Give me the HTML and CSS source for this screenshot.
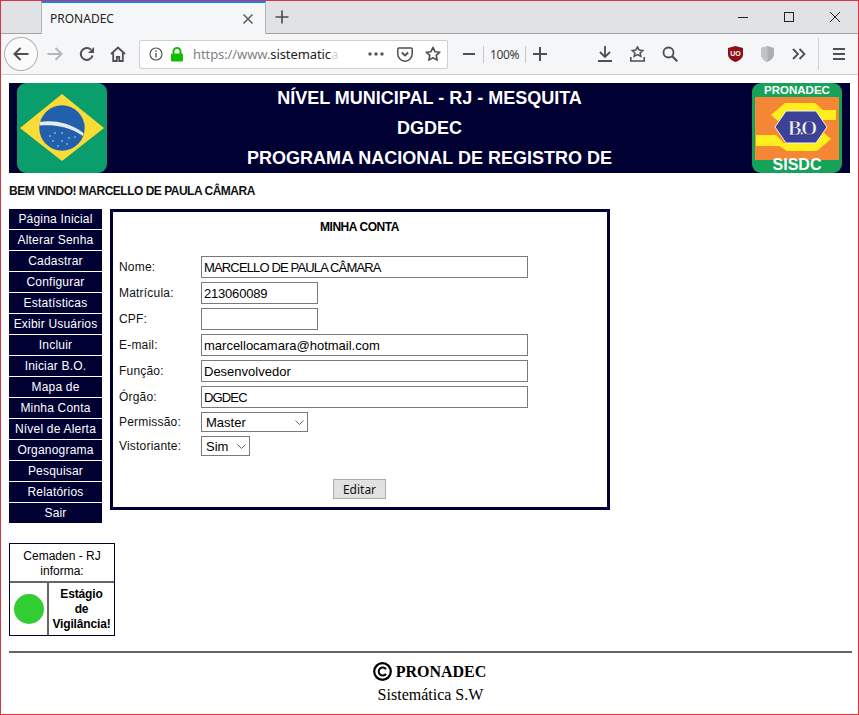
FILE: index.html
```html
<!DOCTYPE html>
<html>
<head>
  <title>PRONADEC</title>
  <link rel="stylesheet" href="styles.css">
</head>
<body>
  <div class="window">
    <div class="tabbar">
      <div class="tab">
        <span class="tab-title">PRONADEC</span>
        <svg class="tab-close" width="12" height="12" viewBox="0 0 12 12"><path d="M1.5 1.5l9 9M10.5 1.5l-9 9" stroke="#5a5a5e" stroke-width="1.5" fill="none"/></svg>
      </div>
      <svg class="tab-new" width="16" height="16" viewBox="0 0 16 16"><path d="M8 1.5v13M1.5 8h13" stroke="#4a4a4f" stroke-width="1.6" fill="none"/></svg>
      <div class="winctl">
        <svg width="46" height="12" viewBox="0 0 46 12"><path d="M18 6.5h10" stroke="#222" fill="none"/></svg>
        <svg width="46" height="12" viewBox="0 0 46 12"><rect x="18.5" y="1.5" width="9" height="9" stroke="#222" fill="none"/></svg>
        <svg width="46" height="12" viewBox="0 0 46 12"><path d="M18 1l10 10M28 1L18 11" stroke="#222" fill="none"/></svg>
      </div>
    </div>

    <div class="toolbar">
      <div class="back">
        <svg width="18" height="16" viewBox="0 0 18 16"><path d="M16.5 8H2.5M8.5 2L2.5 8l6 6" stroke="#4f4f52" stroke-width="2" fill="none"/></svg>
      </div>
      <div class="tool w34">
        <svg width="18" height="16" viewBox="0 0 18 16"><path d="M1.5 8h14M9.5 2l6 6-6 6" stroke="#b6b6b8" stroke-width="2" fill="none"/></svg>
      </div>
      <div class="tool w31">
        <svg width="16" height="16" viewBox="0 0 16 16"><path d="M13.6 9.5A6 6 0 1 1 12 3.6" stroke="#4f4f52" stroke-width="2" fill="none"/><path d="M15 1v6H9z" fill="#4f4f52"/></svg>
      </div>
      <div class="tool w32">
        <svg width="16" height="16" viewBox="0 0 16 16"><path d="M1 8l7-6.5L15 8M3.2 7v8h3.6v-4h2.4v4h3.6V7" stroke="#4f4f52" stroke-width="1.8" fill="none"/></svg>
      </div>

      <div class="urlbar">
        <svg class="url-info" width="14" height="14" viewBox="0 0 14 14"><circle cx="7" cy="7" r="6" stroke="#55555a" stroke-width="1.2" fill="none"/><path d="M7 6v4.5M7 3.2v1.6" stroke="#55555a" stroke-width="1.4"/></svg>
        <svg class="url-lock" width="14" height="15" viewBox="0 0 14 15"><path d="M3.5 7V4.5a3.5 3.5 0 0 1 7 0V7" stroke="#12bc00" stroke-width="2" fill="none"/><rect x="1" y="6.5" width="12" height="8" rx="1" fill="#12bc00"/></svg>
        <span class="url-text"><span class="url-dim">https://www.</span>sistematic<span class="url-fade">a</span></span>
        <svg class="url-dots" width="16" height="4" viewBox="0 0 16 4"><circle cx="2" cy="2" r="1.7" fill="#55555a"/><circle cx="8" cy="2" r="1.7" fill="#55555a"/><circle cx="14" cy="2" r="1.7" fill="#55555a"/></svg>
        <svg class="url-pocket" width="16" height="15" viewBox="0 0 16 15"><path d="M1.8 1h12.4a1 1 0 0 1 1 1v5a7.2 7.2 0 0 1-14.400 0V2a1 1 0 0 1 1-1z" stroke="#4f4f52" stroke-width="1.5" fill="none"/><path d="M4.800 5.500L8 8.500l3.200-3" stroke="#4f4f52" stroke-width="1.8" fill="none"/></svg>
        <svg class="url-star" width="16" height="16" viewBox="0 0 16 16"><path d="M8 1.300l2 4.400 4.800.5-3.600 3.200 1 4.700L8 11.700l-4.200 2.400 1-4.700-3.600-3.200 4.800-.5z" stroke="#4f4f52" stroke-width="1.6" fill="none" stroke-linejoin="round"/></svg>
      </div>

      <div class="zoombox">
        <svg width="14" height="14" viewBox="0 0 14 14"><path d="M1 7h12" stroke="#4f4f52" stroke-width="2"/></svg>
        <span class="zoom-val">100%</span>
        <svg width="14" height="14" viewBox="0 0 14 14"><path d="M0 7h14M7 0v14" stroke="#4f4f52" stroke-width="2"/></svg>
      </div>

      <div class="tools-right">
        <div class="tool w32">
          <svg width="14" height="16" viewBox="0 0 14 16"><path d="M7 0v10M2 6l5 5 5-5M0 15h14" stroke="#4f4f52" stroke-width="1.8" fill="none"/></svg>
        </div>
        <div class="tool w32">
          <svg width="15" height="16" viewBox="0 0 15 16"><path d="M7.500 .8l1.700 3.300 3.500.4-2.600 2.400.7 3.400-3.300-1.700-3.300 1.700.7-3.400L2.300 4.500l3.500-.4z" stroke="#4f4f52" stroke-width="1.500" fill="none"/><path d="M.8 11v4h13.400v-4" stroke="#4f4f52" stroke-width="1.600" fill="none"/></svg>
        </div>
        <div class="tool w33">
          <svg width="16" height="16" viewBox="0 0 16 16"><circle cx="6.500" cy="6.500" r="5" stroke="#4f4f52" stroke-width="1.800" fill="none"/><path d="M10 10l5.300 5.300" stroke="#4f4f52" stroke-width="2.200"/></svg>
        </div>
        <div class="tool-gap"></div>
        <div class="tool w32">
          <svg width="15" height="16" viewBox="0 0 15 16"><path d="M7.500 0L15 2v6.500c0 3.500-3.500 6-7.500 7.500C3.500 14.500 0 12 0 8.500V2z" fill="#8f0f14"/><text class="ublock" x="7.500" y="9.500" text-anchor="middle">UO</text></svg>
        </div>
        <div class="tool w32">
          <svg width="13" height="16" viewBox="0 0 13 16"><path d="M6.500 0L13 2v6c0 3.500-3 6.500-6.500 8C3 14.500 0 11.500 0 8V2z" fill="#adaeb0"/><path d="M6.500 0L0 2v6c0 3.500 3 6.500 6.500 8z" fill="#c2c3c5"/></svg>
        </div>
        <div class="tool w32">
          <svg width="14" height="12" viewBox="0 0 14 12"><path d="M1 1l5 5-5 5M7.500 1l5 5-5 5" stroke="#4f4f52" stroke-width="1.800" fill="none"/></svg>
        </div>
        <div class="tool-sep"></div>
        <div class="tool w39">
          <svg width="14" height="12" viewBox="0 0 14 12"><path d="M1 1h12M1 6h12M1 11h12" stroke="#4f4f52" stroke-width="2"/></svg>
        </div>
      </div>
    </div>

    <div class="page">
      <div class="banner">
        <svg class="flag" width="90" height="90" viewBox="0 0 90 90">
          <rect width="90" height="90" rx="9" fill="#0a9e6d"/>
          <path d="M45 11L87 45 45 78 3 45z" fill="#fbdc36"/>
          <circle cx="45" cy="45" r="22.700" fill="#2260ac"/>
          <path d="M22.500 39C35 37 52 39 66.500 50L66 53C52 43 36 41.500 22.600 42.500z" fill="#e8ebea"/>
          <g fill="#cfdcec">
            <circle cx="33" cy="53" r=".8"/><circle cx="38" cy="50" r=".8"/><circle cx="45" cy="50" r=".8"/>
            <circle cx="52" cy="55" r=".8"/><circle cx="58" cy="54" r=".8"/><circle cx="45" cy="58" r=".8"/>
            <circle cx="36" cy="58" r=".8"/><circle cx="50" cy="61" r=".8"/><circle cx="41" cy="63" r=".8"/>
          </g>
        </svg>
        <div class="banner-title">
          <div>NÍVEL MUNICIPAL - RJ - MESQUITA</div>
          <div>DGDEC</div>
          <div>PROGRAMA NACIONAL DE REGISTRO DE</div>
        </div>
        <svg class="logo" width="90" height="90" viewBox="0 0 90 90">
          <rect width="90" height="90" rx="9" fill="#17a25a"/>
          <rect x="3" y="14" width="84" height="63" fill="#f58636"/>
          <path d="M19 32L33 20H63L71 27H84V37H68L61 28H36L26 38z" fill="#fdee1c"/>
          <path d="M4 52H24L32 60H62L72 50 79 56 65 68H35L27 63H4z" fill="#fdee1c"/>
          <path d="M23 44L34 28H64L75 44 64 60H34z" fill="#3d4198" stroke="#f4f4f4" stroke-width="1"/>
          <text class="logo-bo" x="49" y="52" text-anchor="middle">B.O</text>
          <text class="logo-top" x="45" y="11" text-anchor="middle">PRONADEC</text>
          <text class="logo-bottom" x="45" y="87" text-anchor="middle">SISDC</text>
        </svg>
      </div>

      <p class="welcome">BEM VINDO! MARCELLO DE PAULA CÂMARA</p>

      <div class="content">
        <div class="menu">
          <a>Página Inicial</a>
          <a>Alterar Senha</a>
          <a>Cadastrar</a>
          <a>Configurar</a>
          <a>Estatísticas</a>
          <a>Exibir Usuários</a>
          <a>Incluir</a>
          <a>Iniciar B.O.</a>
          <a>Mapa de</a>
          <a>Minha Conta</a>
          <a>Nível de Alerta</a>
          <a>Organograma</a>
          <a>Pesquisar</a>
          <a>Relatórios</a>
          <a>Sair</a>
        </div>

        <form class="account">
          <h2>MINHA CONTA</h2>
          <div class="row"><label>Nome:</label><input class="long caps" type="text" value="MARCELLO DE PAULA CÂMARA"></div>
          <div class="row"><label>Matrícula:</label><input class="short digits" type="text" value="213060089"></div>
          <div class="row"><label>CPF:</label><input class="short" type="text"></div>
          <div class="row"><label>E-mail:</label><input class="long" type="text" value="marcellocamara@hotmail.com"></div>
          <div class="row"><label>Função:</label><input class="long" type="text" value="Desenvolvedor"></div>
          <div class="row"><label>Órgão:</label><input class="long caps" type="text" value="DGDEC"></div>
          <div class="row row-select"><label>Permissão:</label><select class="perm"><option>Master</option></select></div>
          <div class="row row-select"><label>Vistoriante:</label><select class="vist"><option>Sim</option></select></div>
          <div class="actions"><button type="button">Editar</button></div>
        </form>
      </div>

      <div class="cemaden">
        <div class="cem-head">Cemaden - RJ informa:</div>
        <div class="cem-light"><span class="dot"></span></div>
        <div class="cem-status">Estágio<br>de<br>Vigilância!</div>
      </div>

      <div class="footer">
        <div class="foot-brand">
          <svg class="copy" width="19" height="19" viewBox="0 0 19 19"><circle cx="9.500" cy="9.500" r="8.300" stroke="#000" stroke-width="2.200" fill="none"/><path d="M13 7.200A4 4 0 1 0 13 11.800" stroke="#000" stroke-width="2" fill="none"/></svg>
          PRONADEC
        </div>
        <div class="foot-sub">Sistemática S.W</div>
      </div>
    </div>
  </div>
</body>
</html>
```

FILE: styles.css
```css
html, body {
  margin: 0;
  padding: 0;
  background-color: #ffffff;
}

.window {
  box-sizing: border-box;
  width: 859px;
  height: 715px;
  border: 1px solid #d9343f;
  overflow: hidden;
  font-family: 'Liberation Sans', Arial, sans-serif;
  color: #000000;
}

/* browser chrome */
.tabbar {
  display: flex;
  align-items: stretch;
  height: 32px;
  background-color: #e1e2e5;
  border-bottom: 1px solid #a3a3a6;
}

.tab {
  display: flex;
  align-items: center;
  justify-content: space-between;
  box-sizing: border-box;
  width: 225px;
  height: 33px;
  margin-left: 40px;
  padding: 0 11px 0 8px;
  background-color: #f5f6f7;
  border-top: 2px solid #0a84ff;
  border-left: 1px solid #b5b5b7;
  border-right: 1px solid #b5b5b7;
}

.tab-title {
  font-family: 'Noto Sans', sans-serif;
  font-size: 12px;
  color: #222222;
}

.tab-new {
  align-self: center;
  margin-left: 8px;
}

.winctl {
  display: flex;
  align-items: center;
  margin-left: auto;
}

.toolbar {
  display: flex;
  align-items: center;
  height: 40px;
  padding-left: 3px;
  background-color: #f5f6f7;
  border-bottom: 1px solid #cfcfd1;
}

.back {
  display: flex;
  align-items: center;
  justify-content: center;
  box-sizing: border-box;
  width: 34px;
  height: 34px;
  border: 1px solid #b1b1b3;
  border-radius: 50%;
  background-color: #fbfbfb;
}

.tool {
  display: flex;
  align-items: center;
  justify-content: center;
  height: 32px;
}

.w31 { width: 31px; }
.w32 { width: 32px; }
.w33 { width: 33px; }
.w34 { width: 34px; }
.w39 { width: 39px; }

.tool-gap { width: 33px; }

.tool-sep {
  width: 1px;
  height: 32px;
  margin-left: 3px;
  background-color: #d4d4d6;
}

.urlbar {
  display: flex;
  align-items: center;
  box-sizing: border-box;
  width: 311px;
  height: 29px;
  margin-left: 5px;
  padding: 0 6px 0 9px;
  background-color: #ffffff;
  border: 1px solid #cfcfd1;
  border-radius: 2px;
}

.url-lock { margin-left: 7px; }

.url-text {
  flex: 1;
  margin-left: 9px;
  font-family: 'Noto Sans', sans-serif;
  font-size: 13px;
  letter-spacing: -0.1px;
  white-space: nowrap;
  color: #222222;
}

.url-dim { color: #808084; }
.url-fade { color: #d4d4d6; }

.url-pocket { margin-left: 13px; }
.url-star { margin-left: 12px; }

.zoombox {
  display: flex;
  align-items: center;
  margin-left: 14px;
}

.zoom-val {
  box-sizing: border-box;
  width: 43px;
  margin: 0 7px;
  font-family: 'Noto Sans', sans-serif;
  font-size: 12px;
  letter-spacing: -0.4px;
  text-align: center;
  color: #3c3c40;
  border-left: 1px solid #c8c8ca;
  border-right: 1px solid #c8c8ca;
}

.tools-right {
  display: flex;
  align-items: center;
  margin-left: 42px;
}

.ublock {
  font-family: 'Liberation Sans', sans-serif;
  font-size: 7px;
  font-weight: bold;
  fill: #ffffff;
}

/* page */
.page {
  padding: 8px 6px 0 8px;
}

.banner {
  display: flex;
  justify-content: space-between;
  height: 90px;
  margin-right: 2px;
  padding: 0 8px;
  background-color: #000033;
}

.banner-title {
  flex: 1;
  overflow: hidden;
  text-align: center;
  font-size: 18px;
  font-weight: bold;
  line-height: 30px;
  color: #ffffff;
}

.logo-top {
  font-family: 'Liberation Sans', sans-serif;
  font-size: 11.500px;
  font-weight: bold;
  fill: #ffffff;
}

.logo-bottom {
  font-family: 'Liberation Sans', sans-serif;
  font-size: 16px;
  font-weight: bold;
  fill: #ffffff;
}

.logo-bo {
  font-family: 'Liberation Serif', serif;
  font-size: 21px;
  font-weight: bold;
  letter-spacing: -3px;
  fill: #f0f0fa;
  stroke: #20235f;
  stroke-width: 0.6px;
}

.welcome {
  margin: 11px 0 11px;
  font-size: 12px;
  font-weight: bold;
  line-height: 14px;
  letter-spacing: -0.5px;
  color: #111111;
}

.content {
  display: flex;
  align-items: flex-start;
}

.menu {
  display: flex;
  flex-direction: column;
  gap: 1px;
  width: 93px;
  margin-right: 8px;
}

.menu a {
  display: block;
  height: 20px;
  font-size: 12px;
  line-height: 20px;
  letter-spacing: 0.2px;
  text-align: center;
  white-space: nowrap;
  color: #ffffff;
  background-color: #000033;
}

.account {
  box-sizing: border-box;
  width: 500px;
  height: 301px;
  padding: 0 7px 0 6px;
  border: 3px solid #000033;
}

.account h2 {
  margin: 8px 0 22px;
  font-size: 12px;
  line-height: 14px;
  letter-spacing: -0.45px;
  text-align: center;
}

.row {
  display: flex;
  align-items: flex-start;
  height: 22px;
  margin-bottom: 4px;
}

.row-select {
  height: 20px;
}

.row label {
  width: 82px;
  font-size: 12px;
  line-height: 22px;
  letter-spacing: 0.2px;
  color: #111111;
}

.row-select label {
  line-height: 20px;
}

input {
  box-sizing: border-box;
  height: 22px;
  padding: 1px 2px;
  border: 1px solid #7a7a7a;
  border-radius: 0;
  font-family: 'Liberation Sans', sans-serif;
  font-size: 13px;
  color: #000000;
}

.long { width: 327px; }
.short { width: 117px; }
.caps { letter-spacing: -0.85px; }
.digits { letter-spacing: -0.2px; }

select {
  box-sizing: border-box;
  height: 20px;
  padding: 0 0 0 4px;
  border: 1px solid #7a7a7a;
  border-radius: 0;
  font-family: 'Liberation Sans', sans-serif;
  font-size: 13px;
  color: #000000;
  appearance: none;
  background: #ffffff url("data:image/svg+xml,%3Csvg xmlns='http://www.w3.org/2000/svg' width='9' height='5'%3E%3Cpath d='M.5.5l4 4 4-4' stroke='%23666' fill='none'/%3E%3C/svg%3E") no-repeat right 3px center;
}

.perm { width: 107px; }
.vist { width: 49px; }

.actions {
  display: flex;
  justify-content: center;
  margin-top: 23px;
}

button {
  box-sizing: border-box;
  width: 53px;
  height: 20px;
  padding: 0;
  background-color: #e1e1e1;
  border: 1px solid #adadad;
  border-radius: 0;
  font-family: 'Noto Sans', sans-serif;
  font-size: 12px;
  color: #111111;
}

.cemaden {
  display: grid;
  grid-template-columns: 37px 1fr;
  grid-template-rows: 37px 1fr;
  gap: 2px;
  box-sizing: border-box;
  width: 106px;
  height: 93px;
  margin-top: 20px;
  background-color: #666666;
  border: 1px solid #000033;
}

.cem-head {
  grid-column: 1 / 3;
  box-sizing: border-box;
  padding-top: 5px;
  background-color: #ffffff;
  font-size: 12px;
  line-height: 15px;
  text-align: center;
}

.cem-light {
  display: flex;
  align-items: center;
  justify-content: center;
  background-color: #ffffff;
}

.dot {
  width: 30px;
  height: 30px;
  border-radius: 50%;
  background-color: #32cd32;
}

.cem-status {
  box-sizing: border-box;
  padding-top: 4px;
  background-color: #ffffff;
  font-size: 12px;
  font-weight: bold;
  line-height: 15px;
  letter-spacing: -0.15px;
  text-align: center;
}

.footer {
  margin-top: 15px;
  padding-top: 7px;
  border-top: 2px solid #666666;
  text-align: center;
  font-family: 'Liberation Serif', serif;
  color: #000000;
}

.foot-brand {
  padding-right: 2px;
  font-size: 16px;
  font-weight: bold;
  line-height: 24px;
}

.copy {
  vertical-align: -4px;
}

.foot-sub {
  font-size: 16px;
  line-height: 21px;
}
```
